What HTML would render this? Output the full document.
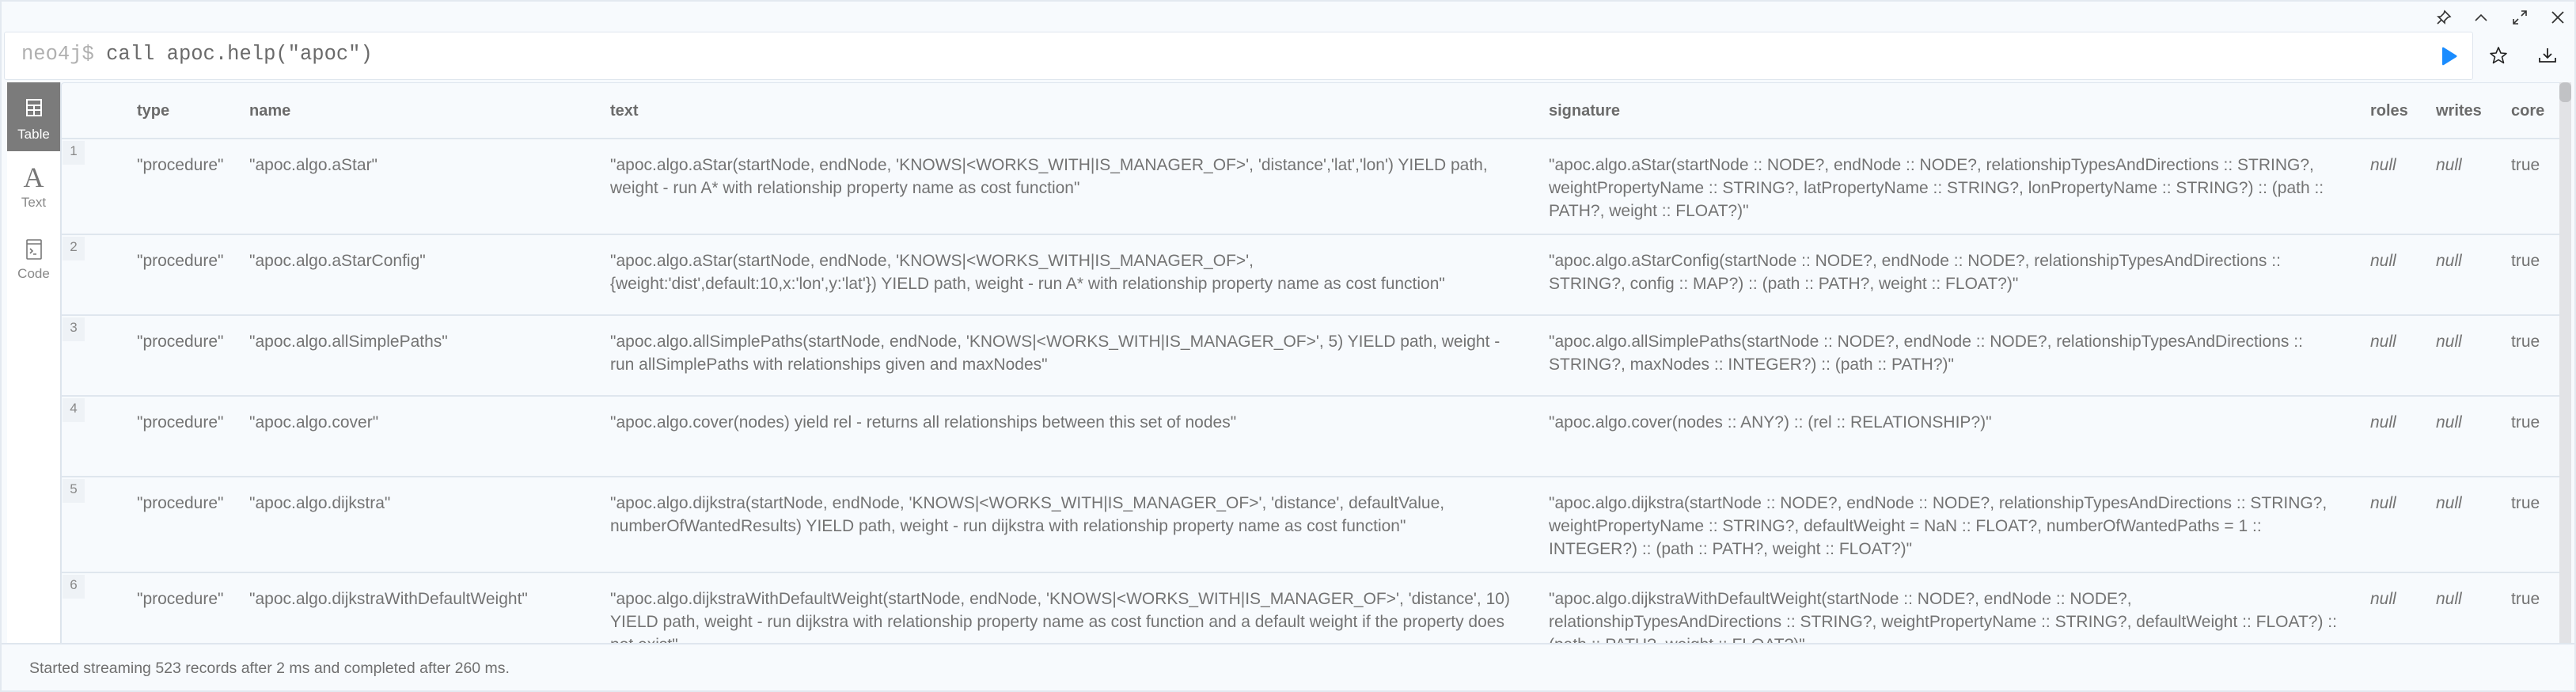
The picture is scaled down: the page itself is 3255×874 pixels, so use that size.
<!DOCTYPE html>
<html><head><meta charset="utf-8"><style>
*{margin:0;padding:0;box-sizing:border-box}
body{width:3255px;height:874px;background:#f6f9fc;font-family:"Liberation Sans",Arial,sans-serif;position:relative;overflow:hidden;color:#717171}
.frame{position:absolute;left:0;top:0;width:3255px;height:874px;border:2px solid #e3e9f0;background:#f7fafd}
.q{position:absolute;left:5px;top:40px;width:3120px;height:61px;background:#fff;border:1px solid #dfe6ee;border-radius:3px}
.q .t{position:absolute;left:21px;top:13px;font-family:"Liberation Mono",monospace;font-size:25.5px;color:#6a6a6a;white-space:pre}
.q .t b{font-weight:normal;color:#b0b0b0}
.side{position:absolute;left:9px;top:104px;width:68px;height:708px;background:#fff;border-right:1px solid #dde3ea}
.tab{position:absolute;left:0;width:67px;text-align:center;font-size:17px;color:#888}
.tab.on{background:#7b7b7b;color:#fff;top:0;height:87px}
.tbl{position:absolute;left:77px;top:104px;width:3157px;height:708px;background:#f7fafd;border-top:1px solid #dde5ee;border-left:1px solid #dde5ee;border-radius:4px 0 0 0;overflow:hidden}
.sb{position:absolute;left:3234px;top:104px;width:15px;height:708px;background:#e2e3e6}
.sb i{position:absolute;left:0;top:0;width:15px;height:25px;background:#c1c2c5;border-radius:6px}
.h{position:absolute;top:24px;font-weight:bold;font-size:20px;color:#6b6b6b}
.row{position:absolute;left:0;width:3157px;border-top:2px solid #dfe6ee}
.row span{position:absolute;top:18px;font-size:21px;line-height:29px;white-space:nowrap;color:#737373}
.row .n{position:absolute;left:1px;top:2px;width:28px;height:30px;background:#eef2f6;font-size:17px;color:#888;text-align:center;line-height:26px}
.row i{font-style:italic}
.st{position:absolute;left:2px;top:812px;width:3251px;height:60px;border-top:2px solid #dfe6ee;background:#f7fafd}
.st span{position:absolute;left:35px;top:19px;font-size:19.5px;color:#6f6f6f}
</style></head><body>
<div class="frame"></div>
<svg style="position:absolute;left:3078px;top:12px" width="20" height="20" viewBox="0 0 20 20" fill="none" stroke="#333" stroke-width="1.6"><path d="M11 2 L18 9 L15 10 L11 14 L11 17 L3 9 L6 9 L10 5 Z M7 13 L2 18"/></svg>
<svg style="position:absolute;left:3125px;top:12px" width="20" height="20" viewBox="0 0 20 20" fill="none" stroke="#333" stroke-width="1.6"><path d="M3 14 L10 7 L17 14"/></svg>
<svg style="position:absolute;left:3174px;top:12px" width="20" height="20" viewBox="0 0 20 20" fill="none" stroke="#333" stroke-width="1.6"><path d="M12 2 H18 V8 M18 2 L12 8 M8 18 H2 V12 M2 18 L8 12"/></svg>
<svg style="position:absolute;left:3222px;top:12px" width="20" height="20" viewBox="0 0 20 20" fill="none" stroke="#333" stroke-width="1.8"><path d="M3 3 L17 17 M17 3 L3 17"/></svg>
<div class="q"><div class="t"><b>neo4j$</b> call apoc.help("apoc")</div></div>
<svg style="position:absolute;left:3085px;top:59px" width="20" height="24" viewBox="0 0 20 24"><path d="M1 2 Q1 0 3 1 L19 11 Q20 12 19 13 L3 23 Q1 24 1 22 Z" fill="#1a8cff"/></svg>
<svg style="position:absolute;left:3145px;top:58px" width="24" height="24" viewBox="0 0 24 24" fill="none" stroke="#222" stroke-width="1.6" stroke-linejoin="round"><path d="M12 2 L15 9 L22 9.5 L16.5 14 L18.5 21.5 L12 17.5 L5.5 21.5 L7.5 14 L2 9.5 L9 9 Z"/></svg>
<svg style="position:absolute;left:3207px;top:59px" width="24" height="22" viewBox="0 0 24 22" fill="none" stroke="#222" stroke-width="1.8"><path d="M12 2 V14 M7 9 L12 14 L17 9 M2 14 V19 H22 V14"/></svg>
<div class="side">
<div class="tab on"><svg style="position:absolute;left:24px;top:21px" width="20" height="22" viewBox="0 0 20 22" fill="none" stroke="#fff" stroke-width="2"><rect x="1" y="1" width="18" height="20"/><path d="M1 8 H19 M1 14 H19 M10 8 V21"/></svg><div style="position:absolute;top:56px;width:67px;text-align:center">Table</div></div>
<div class="tab" style="top:100px;height:90px"><div style="font-family:'Liberation Serif',serif;font-size:36px;color:#777;line-height:40px">A</div><div style="margin-top:2px">Text</div></div>
<div class="tab" style="top:190px;height:90px"><svg style="position:absolute;left:24px;top:8px" width="20" height="26" viewBox="0 0 20 26" fill="none" stroke="#777" stroke-width="1.6"><rect x="1" y="1" width="18" height="24" rx="1"/><path d="M1 6 H19 M5 12 L8 15 L5 18 M9 19 H13"/></svg><div style="position:absolute;top:42px;width:67px;text-align:center">Code</div></div>
</div>
<div class="tbl">
<div class="h" style="left:95px">type</div>
<div class="h" style="left:237px">name</div>
<div class="h" style="left:693px">text</div>
<div class="h" style="left:1879px">signature</div>
<div class="h" style="left:2917px">roles</div>
<div class="h" style="left:3000px">writes</div>
<div class="h" style="left:3095px">core</div>

<div class="row" style="top:69px;height:121px"><div class="n">1</div><span style="left:95px">"procedure"</span><span style="left:237px">"apoc.algo.aStar"</span><span style="left:693px">"apoc.algo.aStar(startNode, endNode, 'KNOWS|&lt;WORKS_WITH|IS_MANAGER_OF&gt;', 'distance','lat','lon') YIELD path,<br>weight - run A* with relationship property name as cost function"</span><span style="left:1879px">"apoc.algo.aStar(startNode :: NODE?, endNode :: NODE?, relationshipTypesAndDirections :: STRING?,<br>weightPropertyName :: STRING?, latPropertyName :: STRING?, lonPropertyName :: STRING?) :: (path ::<br>PATH?, weight :: FLOAT?)"</span><span style="left:2917px"><i>null</i></span><span style="left:3000px"><i>null</i></span><span style="left:3095px">true</span></div>

<div class="row" style="top:190px;height:102px"><div class="n">2</div><span style="left:95px">"procedure"</span><span style="left:237px">"apoc.algo.aStarConfig"</span><span style="left:693px">"apoc.algo.aStar(startNode, endNode, 'KNOWS|&lt;WORKS_WITH|IS_MANAGER_OF&gt;',<br>{weight:'dist',default:10,x:'lon',y:'lat'}) YIELD path, weight - run A* with relationship property name as cost function"</span><span style="left:1879px">"apoc.algo.aStarConfig(startNode :: NODE?, endNode :: NODE?, relationshipTypesAndDirections ::<br>STRING?, config :: MAP?) :: (path :: PATH?, weight :: FLOAT?)"</span><span style="left:2917px"><i>null</i></span><span style="left:3000px"><i>null</i></span><span style="left:3095px">true</span></div>

<div class="row" style="top:292px;height:102px"><div class="n">3</div><span style="left:95px">"procedure"</span><span style="left:237px">"apoc.algo.allSimplePaths"</span><span style="left:693px">"apoc.algo.allSimplePaths(startNode, endNode, 'KNOWS|&lt;WORKS_WITH|IS_MANAGER_OF&gt;', 5) YIELD path, weight -<br>run allSimplePaths with relationships given and maxNodes"</span><span style="left:1879px">"apoc.algo.allSimplePaths(startNode :: NODE?, endNode :: NODE?, relationshipTypesAndDirections ::<br>STRING?, maxNodes :: INTEGER?) :: (path :: PATH?)"</span><span style="left:2917px"><i>null</i></span><span style="left:3000px"><i>null</i></span><span style="left:3095px">true</span></div>

<div class="row" style="top:394px;height:102px"><div class="n">4</div><span style="left:95px">"procedure"</span><span style="left:237px">"apoc.algo.cover"</span><span style="left:693px">"apoc.algo.cover(nodes) yield rel - returns all relationships between this set of nodes"</span><span style="left:1879px">"apoc.algo.cover(nodes :: ANY?) :: (rel :: RELATIONSHIP?)"</span><span style="left:2917px"><i>null</i></span><span style="left:3000px"><i>null</i></span><span style="left:3095px">true</span></div>

<div class="row" style="top:496px;height:121px"><div class="n">5</div><span style="left:95px">"procedure"</span><span style="left:237px">"apoc.algo.dijkstra"</span><span style="left:693px">"apoc.algo.dijkstra(startNode, endNode, 'KNOWS|&lt;WORKS_WITH|IS_MANAGER_OF&gt;', 'distance', defaultValue,<br>numberOfWantedResults) YIELD path, weight - run dijkstra with relationship property name as cost function"</span><span style="left:1879px">"apoc.algo.dijkstra(startNode :: NODE?, endNode :: NODE?, relationshipTypesAndDirections :: STRING?,<br>weightPropertyName :: STRING?, defaultWeight = NaN :: FLOAT?, numberOfWantedPaths = 1 ::<br>INTEGER?) :: (path :: PATH?, weight :: FLOAT?)"</span><span style="left:2917px"><i>null</i></span><span style="left:3000px"><i>null</i></span><span style="left:3095px">true</span></div>

<div class="row" style="top:617px;height:121px"><div class="n">6</div><span style="left:95px">"procedure"</span><span style="left:237px">"apoc.algo.dijkstraWithDefaultWeight"</span><span style="left:693px">"apoc.algo.dijkstraWithDefaultWeight(startNode, endNode, 'KNOWS|&lt;WORKS_WITH|IS_MANAGER_OF&gt;', 'distance', 10)<br>YIELD path, weight - run dijkstra with relationship property name as cost function and a default weight if the property does<br>not exist"</span><span style="left:1879px">"apoc.algo.dijkstraWithDefaultWeight(startNode :: NODE?, endNode :: NODE?,<br>relationshipTypesAndDirections :: STRING?, weightPropertyName :: STRING?, defaultWeight :: FLOAT?) ::<br>(path :: PATH?, weight :: FLOAT?)"</span><span style="left:2917px"><i>null</i></span><span style="left:3000px"><i>null</i></span><span style="left:3095px">true</span></div>
</div>
<div class="sb"><i></i></div>
<div class="st"><span>Started streaming 523 records after 2 ms and completed after 260 ms.</span></div>
</body></html>
